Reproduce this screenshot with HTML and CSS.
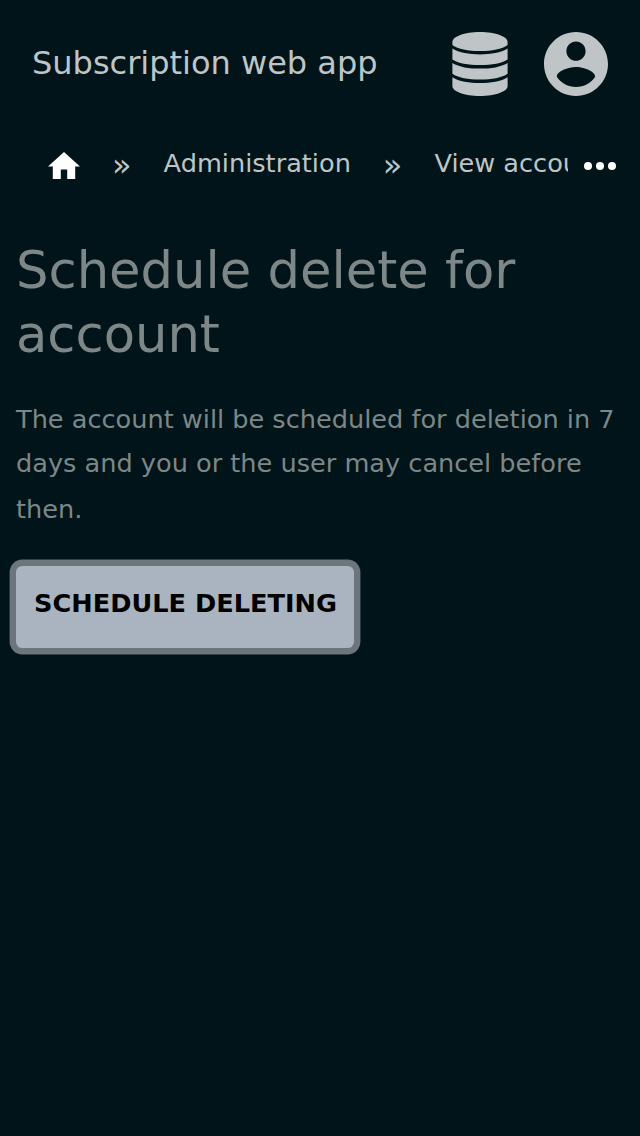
FILE: index.html
```html
<!DOCTYPE html>
<html lang="en">
<head>
<meta charset="utf-8">
<title>Schedule delete for account</title>
<link rel="stylesheet" href="styles.css">
</head>
<body>
<header class="topbar">
  <a class="brand">Subscription web app</a>
  <svg class="database" viewBox="0 0 56 64"><path d="M.4 10C.4 4.500 12.500 0 28 0s27.600 4.500 27.600 10v3C50 17 40 19 28 19S6 17 .4 13Z"/><path d="M.4 16.500C7 20.600 17 22.400 28 22.400s21-1.800 27.600-5.900V27.500C50 31.300 40 33 28 33S6 31.300 .4 27.500Z"/><path d="M.4 30.900C7 35 17 36.600 28 36.600s21-1.600 27.600-5.700V41.700C50 45.700 40 47.500 28 47.500S6 45.700 .4 41.700Z"/><path d="M.4 45.200C7 49.300 17 51 28 51S49 49.300 55.600 45.200v8.800C55.600 59.500 43.500 64 28 64S.4 59.500 .4 54Z"/></svg>
  <svg class="account" viewBox="2 2 20 20"><path d="M12 2C6.480 2 2 6.480 2 12s4.480 10 10 10 10-4.480 10-10S17.520 2 12 2zm0 3c1.660 0 3 1.340 3 3s-1.340 3-3 3-3-1.340-3-3 1.340-3 3-3zm0 14.200c-2.500 0-4.710-1.280-6-3.220.030-1.990 4-3.080 6-3.080 1.990 0 5.970 1.090 6 3.080-1.290 1.940-3.500 3.220-6 3.220z"/></svg>
</header>
<nav class="crumbs">
  <div class="trail">
    <svg class="home" viewBox="2 3 20 17"><path d="M10 20v-6h4v6h5v-8h3L12 3 2 12h3v8z"/></svg>
    <span class="sep">»</span>
    <a class="crumb">Administration</a>
    <span class="sep">»</span>
    <a class="crumb">View account</a>
  </div>
  <svg class="more" viewBox="0 0 32 8"><circle cx="4" cy="4" r="4"/><circle cx="16" cy="4" r="4"/><circle cx="28" cy="4" r="4"/></svg>
</nav>
<main class="content">
  <h1 class="title">Schedule delete for account</h1>
  <p class="note"><span class="line">The account will be scheduled for deletion in 7</span> <span class="line line-tall">days and you or the user may cancel before</span> <span class="line">then.</span></p>
  <button class="submit">SCHEDULE DELETING</button>
</main>
</body>
</html>
```
FILE: styles.css
```css
body { margin: 0; min-height: 1136px; background: #001419; color: #7e8788; font-family: "DejaVu Sans", sans-serif; }
svg { display: block; flex: none; fill: #bfc5c6; }
.topbar { display: flex; align-items: center; height: 128px; padding: 0 32px; box-sizing: border-box; }
.brand { flex: 1; font-size: 32px; line-height: 48px; color: #bfc5c6; white-space: nowrap; padding-bottom: 2px; }
.database { width: 56px; height: 64px; margin-right: 36px; }
.account { width: 64px; height: 64px; }
.crumbs { display: flex; height: 76px; padding: 0 24px 0 48px; align-items: center; }
.trail { display: flex; align-items: center; flex: none; width: 520px; overflow: hidden; white-space: nowrap; color: #bfc5c6; }
.home { width: 32px; height: 27.200px; padding-bottom: 1px; fill: #fff; }
.sep { font-size: 32px; line-height: 40px; margin: 0 32px; padding-bottom: 2px; }
.crumb { font-size: 25.600px; line-height: 40px; padding-bottom: 6px; }
.more { width: 32px; height: 8px; margin-left: 16px; fill: #fff; }
.content { padding: 34px 16px 0; }
.title { margin: 0 0 31px; font-size: 51.200px; line-height: 64px; font-weight: 400; }
.note { margin: 0 0 34.600px; font-size: 25.600px; line-height: 44.800px; white-space: nowrap; }
.line { display: block; height: 44px; }
.line-tall { height: 46px; }
.line:last-child { height: 44.400px; }
.submit { display: block; width: 338px; height: 82px; padding: 0 0 8px 1px; border: 0; border-radius: 6.400px; background: #a9b4c0; box-shadow: 0 0 0 6.400px #6c757d; color: #000; font: 700 25.600px "DejaVu Sans", sans-serif; white-space: nowrap; }
```
